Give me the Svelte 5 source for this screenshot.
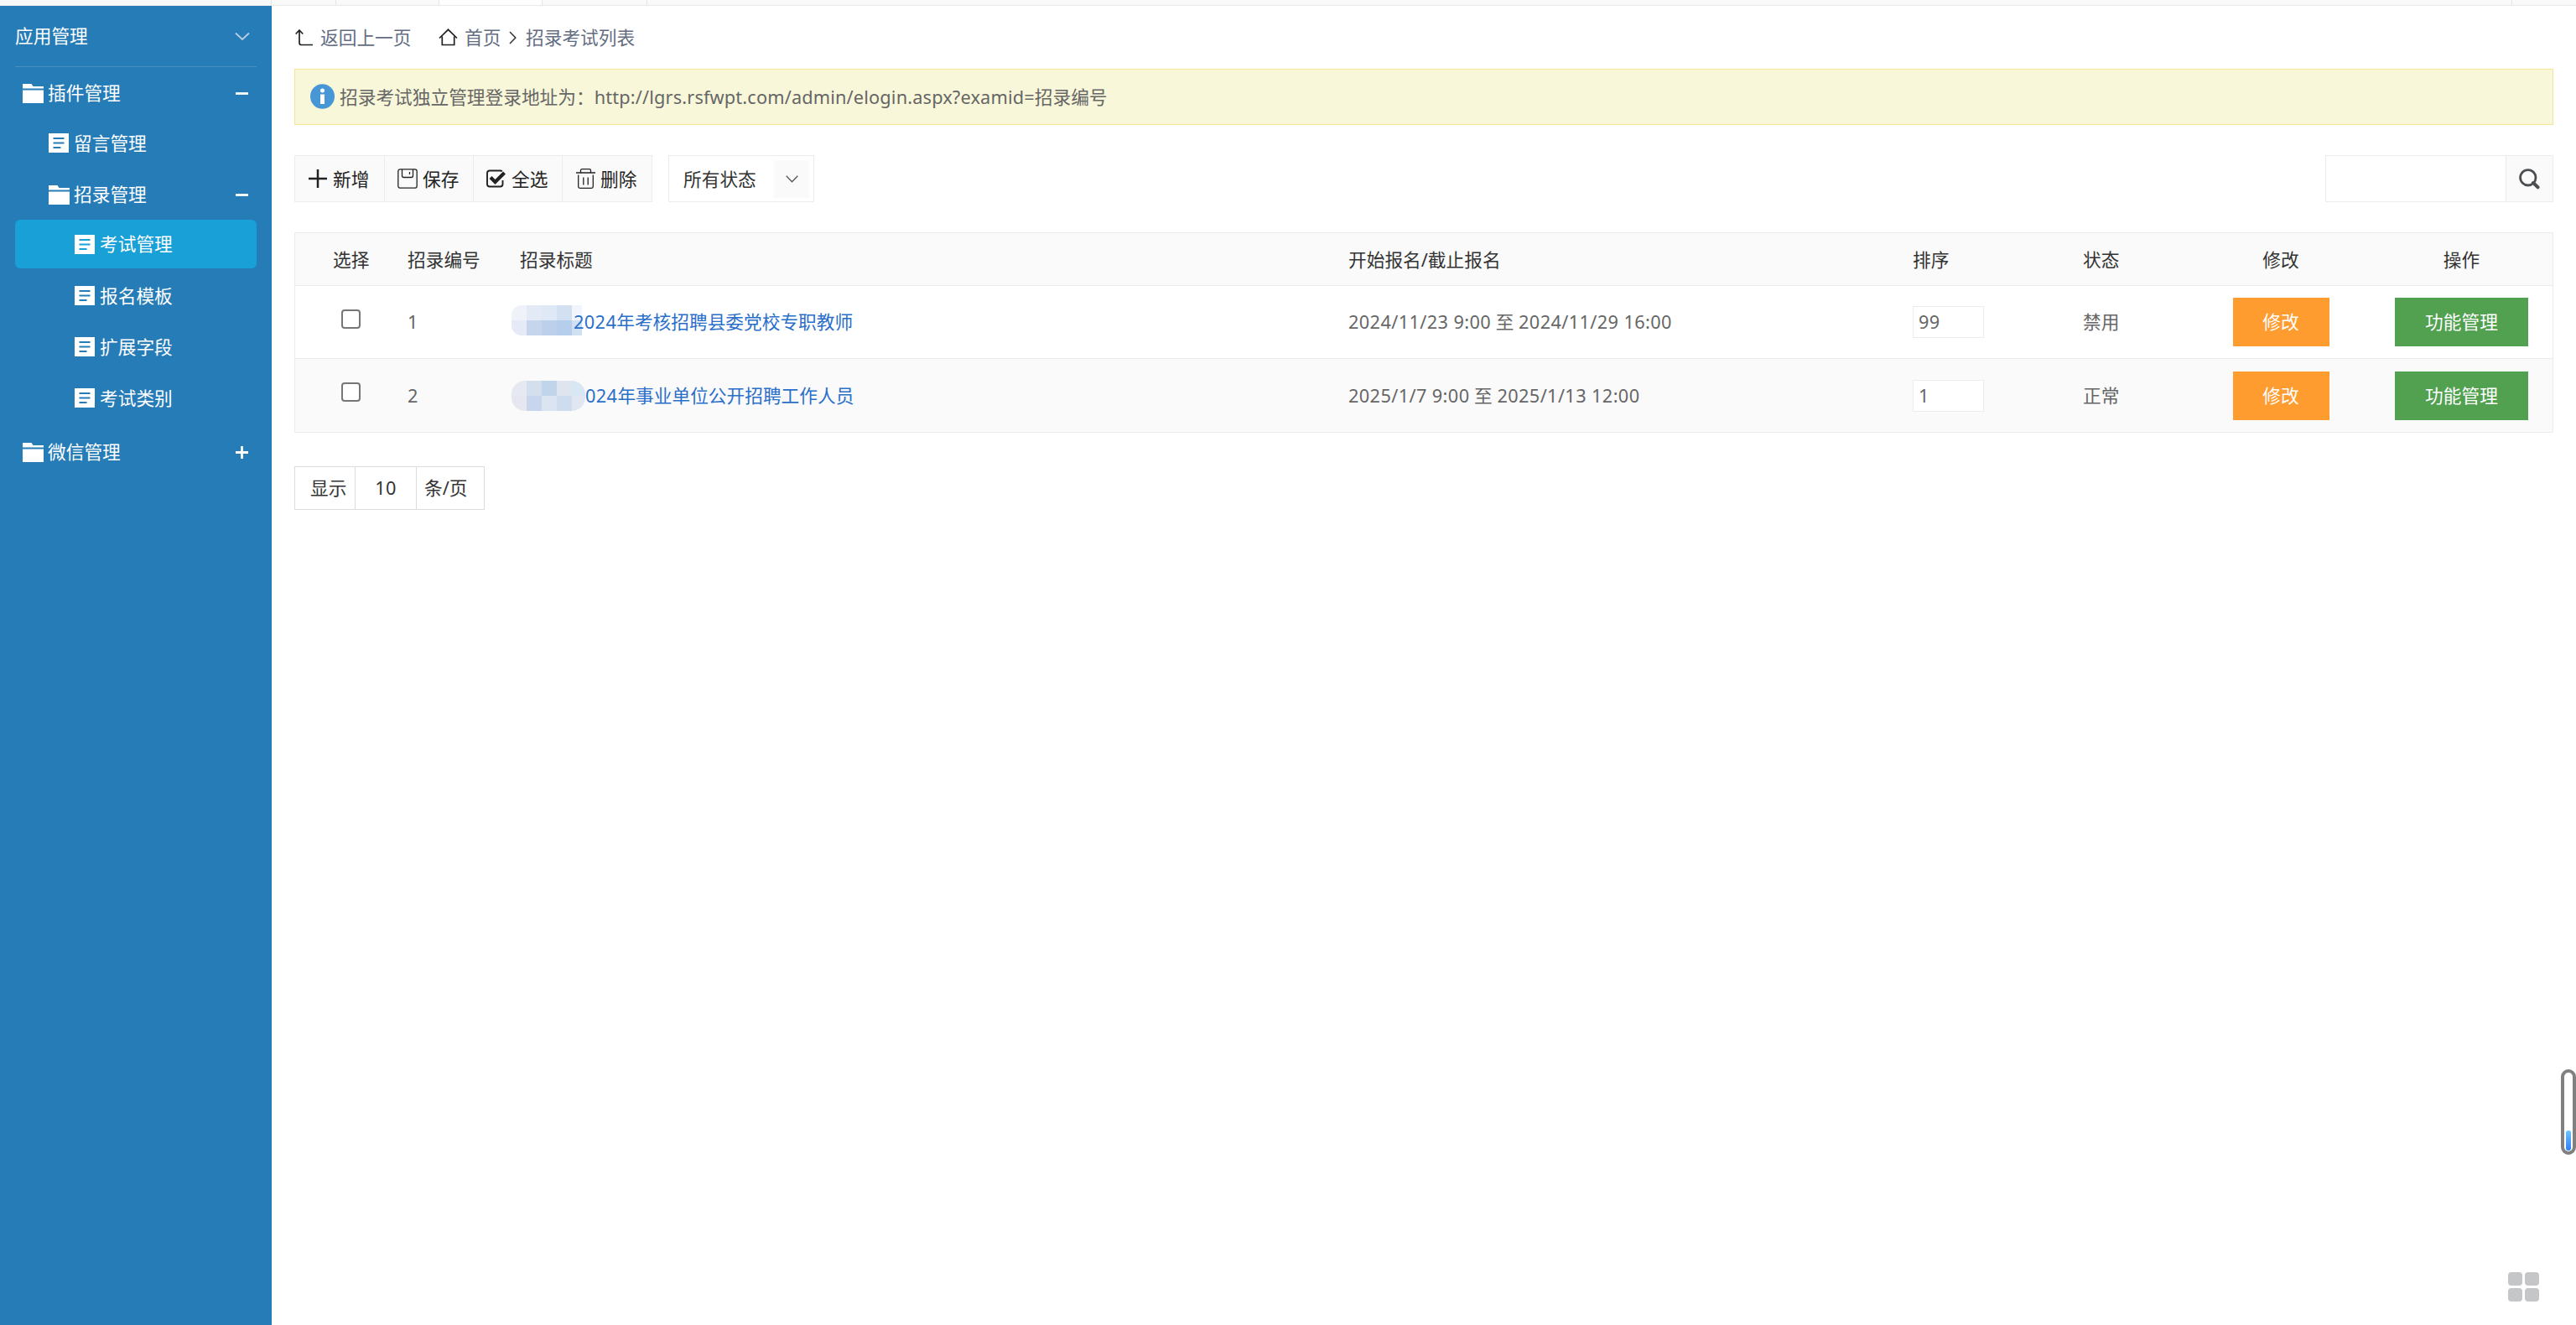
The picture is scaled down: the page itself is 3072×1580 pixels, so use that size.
<script>
  const menu = [
    { label: '插件管理', level: 0, icon: 'folder', mark: 'minus', cls: 'h60' },
    { label: '留言管理', level: 1, icon: 'page', cls: 'h61' },
    { label: '招录管理', level: 1, icon: 'folder', mark: 'minus', cls: 'h60' },
    { label: '考试管理', level: 2, icon: 'page', cls: 'active' },
    { label: '报名模板', level: 2, icon: 'page', cls: 'h61' },
    { label: '扩展字段', level: 2, icon: 'page', cls: 'h61' },
    { label: '考试类别', level: 2, icon: 'page', cls: 'h61' },
    { label: '微信管理', level: 0, icon: 'folder', mark: 'plus', cls: 'last' }
  ];

  const rows = [
    {
      id: 1, title: ['2024', '年考核招聘县委党校专职教师'],
      from: '2024/11/23 9:00', to: '2024/11/29 16:00', sort: '99', status: '禁用',
      mosaic: ['#f0f2f9', '#e3e9f5', '#dfe9f5', '#d3e0f2', '#f0f6fc', '#e6eaf6', '#c6d4ec', '#bccfeb', '#b6ceeb', '#cfe0f3'],
      width: 84
    },
    {
      id: 2, title: ['024', '年事业单位公开招聘工作人员'],
      from: '2025/1/7 9:00', to: '2025/1/13 12:00', sort: '1', status: '正常',
      mosaic: ['#e6e8f2', '#d3dfec', '#c0d4ea', '#dfe5ee', '#d9e6f3', '#e6e6f1', '#c7d5ed', '#dae5f1', '#cfdcee', '#e0e7f3'],
      width: 88
    }
  ];
</script>

<div class="app">
  <div class="tabstrip">
    <span class="t0"></span><span class="t1"></span><span class="t2"></span><span class="t3"></span><span class="t4"></span><span class="rest"></span><span class="end"></span>
  </div>

  <div class="body">
    <aside>
      <div class="side-title">
        <span>应用管理</span>
        <svg width="18" height="11" viewBox="0 0 18 11"><path d="M1 1.5 9 9l8-7.5" fill="none" stroke="#b9cfe0" stroke-width="1.8" /></svg>
      </div>
      <nav>
        {#each menu as m}
          <div class="item l{m.level} {m.cls}">
            {#if m.icon === 'folder'}
              <svg class="folder" width="25" height="24" viewBox="0 0 25 24"><path d="M0 1h10.500l2 3H25v2.500H0zM0 8.500h25V24H0z" fill="#fff" /></svg>
            {:else}
              <svg class="page" width="24" height="23" viewBox="0 0 24 23"><path d="M0 0h24v23H0z" fill="#fff" /><path class="lines" d="M5.500 6h13M5.500 11.500h13M5.500 17h9" fill="none" stroke-width="2.200" /></svg>
            {/if}
            <span>{m.label}</span>
            {#if m.mark}
              <svg class="mark" width="15" height="15" viewBox="0 0 15 15"><path d={m.mark === 'plus' ? 'M0 7.5h15M7.5 0v15' : 'M0 7.5h15'} stroke="#fff" stroke-width="2.800" /></svg>
            {/if}
          </div>
        {/each}
      </nav>
    </aside>

    <main>
      <div class="crumbs">
        <svg class="back" width="21" height="20" viewBox="0 0 21 20"><path d="M.7 5.500 5 1l4.300 4.500M5 1.500V16q0 2.500 2.500 2.500H21" fill="none" stroke="#222" stroke-width="1.700" /></svg>
        <span class="c1">返回上一页</span>
        <svg class="home" width="23" height="21" viewBox="0 0 23 21"><path d="M1 11.500 11.500 1.300 22 11.500M4.300 9.500v10h14.400v-10" fill="none" stroke="#222" stroke-width="1.700" /></svg>
        <span class="c2">首页</span>
        <svg class="sep" width="9" height="16" viewBox="0 0 9 16"><path d="m1 1 6.800 7L1 15" fill="none" stroke="#333" stroke-width="1.500" /></svg>
        <span>招录考试列表</span>
      </div>

      <div class="notice">
        <svg width="29" height="30" viewBox="0 0 29 30"><ellipse cx="14.500" cy="15" rx="14.500" ry="14.800" fill="#4796d6" /><circle cx="14.500" cy="8" r="2.500" fill="#fff" /><path d="M12 12.500h5V24h-5z" fill="#fff" /></svg>
        <span>招录考试独立管理登录地址为：<span class="url">http://lgrs.rsfwpt.com/admin/elogin.aspx?examid=</span>招录编号</span>
      </div>

      <div class="toolbar">
        <div class="btns">
          <div class="btn plus">
            <svg width="22" height="24" viewBox="0 0 22 24"><path d="M0 12h22M11 1v22" stroke="#222" stroke-width="2.500" /></svg><span>新增</span>
          </div>
          <div class="btn">
            <svg width="24" height="24" viewBox="0 0 24 24"><g fill="none" stroke="#222" stroke-width="1.300"><rect x=".8" y=".8" width="22.400" height="22.400" rx="2.500" /><path d="M5.500 1v7.500q0 2 2 2h9q2 0 2-2V1M14.500 4v3" /></g></svg><span>保存</span>
          </div>
          <div class="btn">
            <svg width="24" height="22" viewBox="0 0 24 22"><path d="M19.500 13v4.500q0 3-3 3H4q-3 0-3-3v-13q0-3 3-3h12.500q1.500 0 2.300.7" fill="none" stroke="#222" stroke-width="1.900" /><path d="m5 9.500 5.500 5.500L21.500 4" fill="none" stroke="#222" stroke-width="4.200" /></svg><span>全选</span>
          </div>
          <div class="btn trash">
            <svg width="23" height="24" viewBox="0 0 23 24"><path d="M0 5h23M5.500 4.500V2.300q0-1.600 1.600-1.600h8.800q1.600 0 1.600 1.600v2.200M2.700 7.500v14q0 1.800 1.800 1.800h14q1.800 0 1.800-1.800v-14M8.800 10.500v9M14.200 10.500v9" fill="none" stroke="#222" stroke-width="1.300" /></svg><span>删除</span>
          </div>
        </div>
        <div class="select">
          <span>所有状态</span>
          <div class="arrow"><svg width="15" height="9" viewBox="0 0 15 9"><path d="m.7.700 6.800 7 6.800-7" fill="none" stroke="#555" stroke-width="1.300" /></svg></div>
        </div>
        <div class="search">
          <div class="field"></div>
          <div class="go"><svg width="25" height="25" viewBox="0 0 25 25"><circle cx="10.800" cy="10.800" r="9.200" fill="none" stroke="#4c4f52" stroke-width="2.800" /><path d="m17 17 5.500 5.300" stroke="#4c4f52" stroke-width="4" stroke-linecap="round" /></svg></div>
        </div>
      </div>

      <div class="table">
        <div class="row head">
          <span class="pick">选择</span><span>招录编号</span><span>招录标题</span><span>开始报名/截止报名</span><span>排序</span><span>状态</span><span class="mid">修改</span><span class="mid">操作</span>
        </div>
        {#each rows as r, i}
          <div class="row" class:alt={i % 2 === 1}>
            <span class="pick"><i class="box"></i></span>
            <span class="latin">{r.id}</span>
            <span class="title">
              <svg class="mosaic m{r.id}" width={r.width} height="36" viewBox="0 0 {r.width} 36">
                {#each r.mosaic as c, k}
                  <rect x={(k % 5) * 18} y={k < 5 ? 0 : 18} width="18" height="18" fill={c} />
                {/each}
              </svg><span class="link"><span class="latin">{r.title[0]}</span>{r.title[1]}</span>
            </span>
            <span><span class="latin">{r.from}</span> 至 <span class="latin">{r.to}</span></span>
            <span><i class="input latin">{r.sort}</i></span>
            <span>{r.status}</span>
            <span class="mid"><b class="edit">修改</b></span>
            <span class="mid"><b class="manage">功能管理</b></span>
          </div>
        {/each}
      </div>

      <div class="pager">
        <span class="p1">显示</span><span class="p2 latin">10</span><span class="p3">条/页</span>
      </div>
    </main>
  </div>

  <div class="gauge"><div></div></div>
  <div class="grid4"><i></i><i></i><i></i><i></i></div>
</div>

<style>
  :global(body) { background: #fff; overflow: hidden; }
  .app {
    position: relative;
    display: flex;
    flex-direction: column;
    width: 3072px;
    height: 1580px;
    overflow: hidden;
    font: 21.7px/30px 'Noto Sans', 'Noto Sans CJK SC', sans-serif;
    color: #666;
  }
  .app * { box-sizing: border-box; }
  svg { display: block; flex: none; }
  span { white-space: nowrap; }
  .latin { letter-spacing: 0.4px; }
  .url { letter-spacing: 0.18px; }

  .tabstrip { display: flex; height: 7px; background: #f9f9f9; border-bottom: 1px solid #e9e9e9; }
  .tabstrip span { border-right: 1px solid #e4e4e4; }
  .t0 { width: 324px; }
  .t1 { width: 77px; }
  .t2 { width: 123px; }
  .t3 { width: 123px; background: #fff; }
  .t4 { width: 125px; }
  .rest { flex: 1; }
  .tabstrip .end { width: 76px; border: 0; }

  .body { display: flex; flex: 1; }
  aside { width: 324px; background: #267cb7; color: #fff; padding: 0 18px; }
  .side-title {
    display: flex;
    align-items: center;
    justify-content: space-between;
    height: 73px;
    padding: 0 8px 0 0;
    border-bottom: 1px solid #4590c3;
  }
  nav { padding-top: 1px; }
  .item { display: flex; align-items: center; gap: 5px; padding-right: 10px; }
  .l0 { padding-left: 9px; }
  .l1 { padding-left: 40px; }
  .l2 { padding-left: 71px; }
  .page { margin-right: 1px; }
  .lines { stroke: #267cb7; }
  .mark { margin-left: auto; }
  .h60 { height: 60px; }
  .h61 { height: 61px; }
  .l1.h61 { padding-bottom: 2px; }
  .active { height: 58px; background: #18a0d7; border-radius: 6px; margin: 0 0 2px; }
  .active .lines { stroke: #18a0d7; }
  .last { height: 60px; margin-top: 4px; }

  main { flex: 1; padding: 0 27px; display: flex; flex-direction: column; }
  .crumbs { display: flex; align-items: center; height: 75px; color: #636d82; }
  .crumbs span { padding-top: 1px; }
  .back { margin: 0 9px 0 1px; }
  .c1 { width: 141px; }
  .home { margin-right: 8px; }
  .c2 { width: 53px; }
  .sep { margin-right: 11px; }
  .notice {
    display: flex;
    align-items: center;
    gap: 6px;
    height: 67px;
    padding: 0 18px;
    background: #f8f7d9;
    border: 1px solid #f3e595;
  }
  .notice > span { padding-top: 1px; }
  .notice svg { margin-top: -2px; }
  .toolbar { display: flex; height: 56px; margin-top: 36px; color: #333; }
  .toolbar span { padding-top: 2px; }
  .btns { display: flex; border: 1px solid #ececec; background: #fafafa; width: 427px; }
  .btn { display: flex; align-items: center; flex: 1; gap: 6px; padding-left: 15px; color: #222; }
  .plus { gap: 7px; padding-left: 16px; }
  .btn.trash { padding-left: 16px; }
  .btn + .btn { border-left: 1px solid #ececec; }
  .select {
    display: flex;
    align-items: center;
    justify-content: space-between;
    width: 174px;
    margin-left: 19px;
    padding: 0 5px 0 17px;
    border: 1px solid #ececec;
  }
  .arrow { display: grid; place-items: center; width: 42px; height: 45px; background: #fafafa; }
  .search { display: flex; width: 272px; margin-left: auto; border: 1px solid #ececec; }
  .field { flex: 1; }
  .go { display: grid; place-items: center; width: 56px; border-left: 1px solid #ececec; background: #fafafa; }

  .table { margin-top: 36px; border: 1px solid #ececec; }
  .row {
    display: grid;
    grid-template-columns: 134px 134px 988px 673px 203px 129px 214px 217px;
    align-items: center;
    height: 87px;
    border-bottom: 1px solid #ececec;
  }
  .row:last-child { border-bottom: 0; }
  .head { height: 63px; padding-top: 2px; background: #fafafa; color: #333; }
  .alt { background: #fafafa; }
  .pick { padding-left: 45px; }
  .box {
    display: block;
    width: 23px;
    height: 23px;
    margin: -8px 0 0 10px;
    border: 2px solid #767676;
    border-radius: 4px;
    background: #fff;
  }
  .mid { text-align: center; }
  .title { display: flex; align-items: center; margin-left: -10px; }
  .m1 { border-radius: 12px 0 0 12px; margin: -4px -10px 0 0; }
  .m2 { border-radius: 16px; }
  .link { position: relative; color: #2a6fca; }
  .input {
    display: block;
    width: 85px;
    height: 38px;
    padding-left: 6px;
    line-height: 36px;
    font-style: normal;
    background: #fff;
    border: 1px solid #ececec;
  }
  b { display: inline-block; height: 58px; line-height: 58px; font-weight: 400; color: #fff; vertical-align: middle; }
  .edit { width: 115px; background: #ff9c30; }
  .manage { width: 159px; background: #51a151; }

  .pager {
    display: flex;
    align-items: center;
    width: 227px;
    height: 52px;
    margin-top: 40px;
    border: 1px solid #dcdcdc;
    color: #333;
  }
  .pager span { height: 50px; line-height: 50px; }
  .p1 { width: 71px; padding-left: 18px; }
  .p2 { width: 74px; border: solid #dcdcdc; border-width: 0 1px; text-align: center; }
  .p3 { padding-left: 9px; }

  .gauge {
    position: absolute;
    left: 3054px;
    top: 1275px;
    width: 18px;
    height: 102px;
    border: 4px solid #808080;
    border-radius: 9px;
    background: #fff;
    display: flex;
    align-items: flex-end;
    justify-content: center;
    padding-bottom: 1px;
  }
  .gauge div { width: 6px; height: 24px; border-radius: 3px; background: linear-gradient(#6cc4ff, #2f7df6); }
  .grid4 {
    position: absolute;
    left: 2991px;
    top: 1517px;
    display: grid;
    grid-template-columns: 17px 17px;
    grid-auto-rows: 16px;
    gap: 3px;
  }
  .grid4 i { background: #c5c6c8; border-radius: 4px; }
</style>
